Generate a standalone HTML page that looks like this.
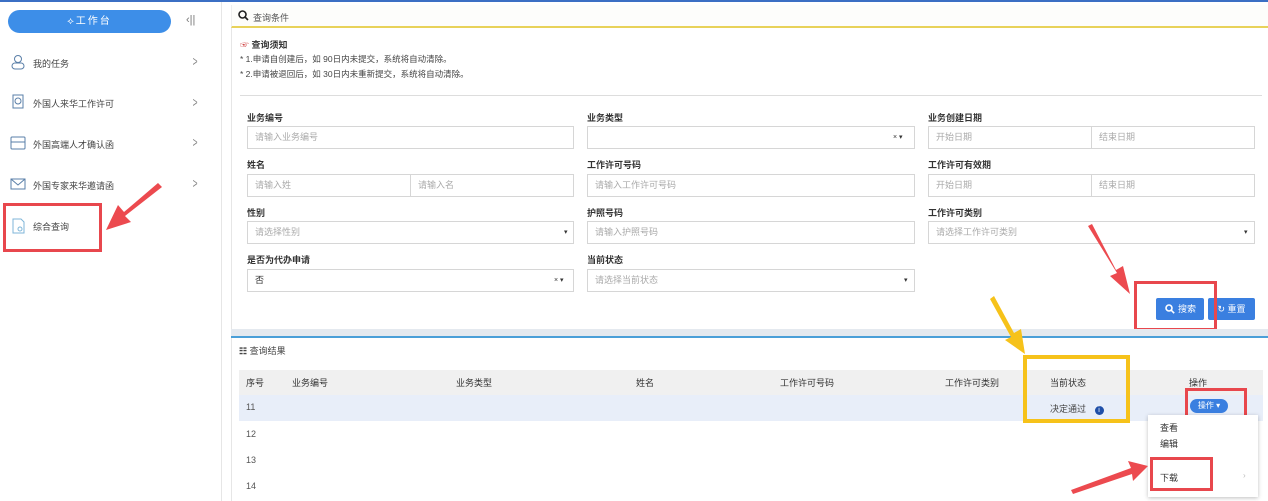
<!DOCTYPE html>
<html><head><meta charset="utf-8"><style>
*{margin:0;padding:0;box-sizing:border-box}
body{width:1268px;height:501px;overflow:hidden;background:#fff;font-family:"Liberation Sans","Noto Sans CJK SC",sans-serif;font-size:9px;color:#333;position:relative}
.a{position:absolute}
.lbl{position:absolute;font-size:9px;font-weight:bold;color:#333}
.inp{position:absolute;height:23px;border:1px solid #d6d6d6;background:#fff;color:#aaa;font-size:9px;line-height:21px;padding-left:7px}
.mi{position:absolute;left:33px;font-size:9px;color:#444}
.ch{position:absolute;left:191px;font-size:14px;color:#888;transform:scaleX(.6)}
.th{position:absolute;top:376px;font-size:9px;color:#333}
.rn{position:absolute;left:246px;font-size:9px;color:#555}
.tri{position:absolute;font-size:7px;color:#333}
</style></head><body>
<div class="a" style="left:0;top:0;width:1268px;height:2px;background:#3b6fc4"></div>
<!-- sidebar -->
<div class="a" style="left:221px;top:2px;width:1px;height:499px;background:#e6e6e6"></div>
<div class="a" style="left:8px;top:10px;width:163px;height:23px;border-radius:12px;background:#3d8ee8;color:#fff;text-align:center;line-height:23px;font-size:10px;letter-spacing:2px">⟡工作台</div>
<div class="a" style="left:186px;top:14px;font-size:11px;color:#777">‹||</div>
<svg class="a" style="left:10px;top:54px" width="16" height="180" fill="none" stroke="#5a7fa8" stroke-width="1">
<circle cx="8" cy="5" r="3.5"/><rect x="2" y="9" width="12" height="6" rx="3"/>
<rect x="3" y="41" width="10" height="13"/><circle cx="8" cy="47" r="3"/>
<rect x="1" y="83" width="14" height="12" rx="1"/><path d="M1 88h14"/>
<rect x="1" y="125" width="14" height="10"/><path d="M1 125l7 6 7-6"/>
<path d="M3 165h8l3 3v11H3z" stroke="#7fb6d8"/><circle cx="10" cy="175" r="2" stroke="#7fb6d8"/>
</svg>
<div class="mi" style="top:57px">我的任务</div><div class="ch" style="top:53px">&gt;</div>
<div class="mi" style="top:97px">外国人来华工作许可</div><div class="ch" style="top:94px">&gt;</div>
<div class="mi" style="top:138px">外国高端人才确认函</div><div class="ch" style="top:134px">&gt;</div>
<div class="mi" style="top:179px">外国专家来华邀请函</div><div class="ch" style="top:175px">&gt;</div>
<div class="mi" style="top:220px">综合查询</div>
<div class="a" style="left:3px;top:203px;width:99px;height:49px;border:3px solid #e8474d"></div>
<!-- main header -->
<div class="a" style="left:231px;top:5px;width:1037px;height:23px;background:#fdfdfb;border-bottom:2px solid #e8d25a;border-left:1px solid #eee"></div>
<svg class="a" style="left:238px;top:10px" width="11" height="11" fill="none" stroke="#222" stroke-width="1.6"><circle cx="4.5" cy="4.5" r="3.5"/><path d="M7 7l3 3"/></svg>
<div class="a" style="left:253px;top:11px;font-size:9px;color:#555">查询条件</div>
<div class="a" style="left:231px;top:28px;width:1px;height:473px;background:#e6e6e6"></div>
<div class="a" style="left:240px;top:38px;font-size:9px;font-weight:bold"><span style="color:#c33">☞</span> 查询须知</div>
<div class="a" style="left:240px;top:53px;font-size:8.5px;color:#444">* 1.申请自创建后，如 90日内未提交，系统将自动清除。</div>
<div class="a" style="left:240px;top:68px;font-size:8.5px;color:#444">* 2.申请被退回后，如 30日内未重新提交，系统将自动清除。</div>
<div class="a" style="left:240px;top:95px;width:1022px;height:1px;background:#ddd"></div>
<!-- form -->
<div class="lbl" style="left:247px;top:111px">业务编号</div>
<div class="inp" style="left:247px;top:126px;width:327px">请输入业务编号</div>
<div class="lbl" style="left:587px;top:111px">业务类型</div>
<div class="inp" style="left:587px;top:126px;width:328px"></div><div class="tri" style="left:893px;top:133px">× ▾</div>
<div class="lbl" style="left:928px;top:111px">业务创建日期</div>
<div class="inp" style="left:928px;top:126px;width:164px">开始日期</div>
<div class="inp" style="left:1091px;top:126px;width:164px">结束日期</div>

<div class="lbl" style="left:247px;top:158px">姓名</div>
<div class="inp" style="left:247px;top:174px;width:164px">请输入姓</div>
<div class="inp" style="left:410px;top:174px;width:164px">请输入名</div>
<div class="lbl" style="left:587px;top:158px">工作许可号码</div>
<div class="inp" style="left:587px;top:174px;width:328px">请输入工作许可号码</div>
<div class="lbl" style="left:928px;top:158px">工作许可有效期</div>
<div class="inp" style="left:928px;top:174px;width:164px">开始日期</div>
<div class="inp" style="left:1091px;top:174px;width:164px">结束日期</div>

<div class="lbl" style="left:247px;top:206px">性别</div>
<div class="inp" style="left:247px;top:221px;width:327px">请选择性别</div><div class="tri" style="left:564px;top:228px">▾</div>
<div class="lbl" style="left:587px;top:206px">护照号码</div>
<div class="inp" style="left:587px;top:221px;width:328px">请输入护照号码</div>
<div class="lbl" style="left:928px;top:206px">工作许可类别</div>
<div class="inp" style="left:928px;top:221px;width:327px">请选择工作许可类别</div><div class="tri" style="left:1244px;top:228px">▾</div>

<div class="lbl" style="left:247px;top:253px">是否为代办申请</div>
<div class="inp" style="left:247px;top:269px;width:327px;color:#333">否</div><div class="tri" style="left:554px;top:276px">× ▾</div>
<div class="lbl" style="left:587px;top:253px">当前状态</div>
<div class="inp" style="left:587px;top:269px;width:328px">请选择当前状态</div><div class="tri" style="left:904px;top:276px">▾</div>

<div class="a" style="left:1156px;top:298px;width:48px;height:22px;background:#3a7fe0;border-radius:2px;color:#fff;font-size:9px;line-height:22px;padding-left:22px">搜索</div>
<svg class="a" style="left:1165px;top:304px" width="10" height="10" fill="none" stroke="#fff" stroke-width="1.6"><circle cx="4" cy="4" r="3"/><path d="M6.2 6.2l3 3"/></svg>
<div class="a" style="left:1208px;top:298px;width:47px;height:22px;background:#3a7fe0;border-radius:2px;color:#fff;font-size:9px;line-height:22px;text-align:center">↻ 重置</div>
<div class="a" style="left:1134px;top:281px;width:83px;height:50px;border:3px solid #e8474d"></div>

<!-- separator -->
<div class="a" style="left:231px;top:329px;width:1037px;height:8px;background:#e4e9ef"></div>
<div class="a" style="left:231px;top:336px;width:1037px;height:2px;background:#4a9fd8"></div>
<div class="a" style="left:239px;top:344px;font-size:9px;color:#444"><b>☷</b> 查询结果</div>
<!-- table -->
<div class="a" style="left:239px;top:370px;width:1024px;height:25px;background:#f0f0f0"></div>
<div class="a" style="left:239px;top:395px;width:1024px;height:26px;background:#e8eef9"></div>
<div class="th" style="left:246px">序号</div>
<div class="th" style="left:292px">业务编号</div>
<div class="th" style="left:456px">业务类型</div>
<div class="th" style="left:636px">姓名</div>
<div class="th" style="left:780px">工作许可号码</div>
<div class="th" style="left:945px">工作许可类别</div>
<div class="th" style="left:1050px">当前状态</div>
<div class="th" style="left:1189px">操作</div>
<div class="rn" style="top:402px">11</div>
<div class="rn" style="top:429px">12</div>
<div class="rn" style="top:455px">13</div>
<div class="rn" style="top:481px">14</div>
<div class="a" style="left:1050px;top:402px;font-size:9px;color:#444">决定通过 <span style="display:inline-block;width:9px;height:9px;border-radius:50%;background:#1f4fa8;color:#fff;font-size:7px;text-align:center;line-height:9px;margin-left:6px">i</span></div>
<div class="a" style="left:1023px;top:355px;width:107px;height:68px;border:4px solid #f6c21a"></div>
<div class="a" style="left:1190px;top:399px;width:38px;height:14px;background:#3a7fe0;border-radius:7px;color:#fff;font-size:8px;line-height:14px;text-align:center">操作 ▾</div>
<div class="a" style="left:1185px;top:388px;width:62px;height:32px;border:3px solid #e8474d"></div>
<div class="a" style="left:1148px;top:415px;width:110px;height:82px;background:#fff;box-shadow:0 1px 4px rgba(0,0,0,.25)"></div>
<div class="a" style="left:1160px;top:421px;font-size:9px">查看</div>
<div class="a" style="left:1160px;top:437px;font-size:9px">编辑</div>
<div class="a" style="left:1160px;top:471px;font-size:9px">下载</div>
<div class="a" style="left:1243px;top:471px;font-size:8px;color:#bbb">›</div>
<div class="a" style="left:1150px;top:457px;width:63px;height:34px;border:3px solid #e8474d"></div>
<!-- arrows -->
<svg class="a" style="left:0;top:0" width="1268" height="501">
<g fill="#ec4a4f">
<polygon points="162,187 158,183 124,212 118,205 106,230 131,222 125,216"/>
<polygon points="1088,226 1092,224 1116,270 1123,266 1130,294 1110,276 1117,273"/>
<polygon points="1073,494 1071,490 1131,468 1128,461 1148,466 1133,481 1132,474"/>
</g>
<polygon fill="#f6c21a" points="990,299 994,296 1014,333 1021,329 1025,354 1005,340 1011,337"/>
</svg>
</body></html>
